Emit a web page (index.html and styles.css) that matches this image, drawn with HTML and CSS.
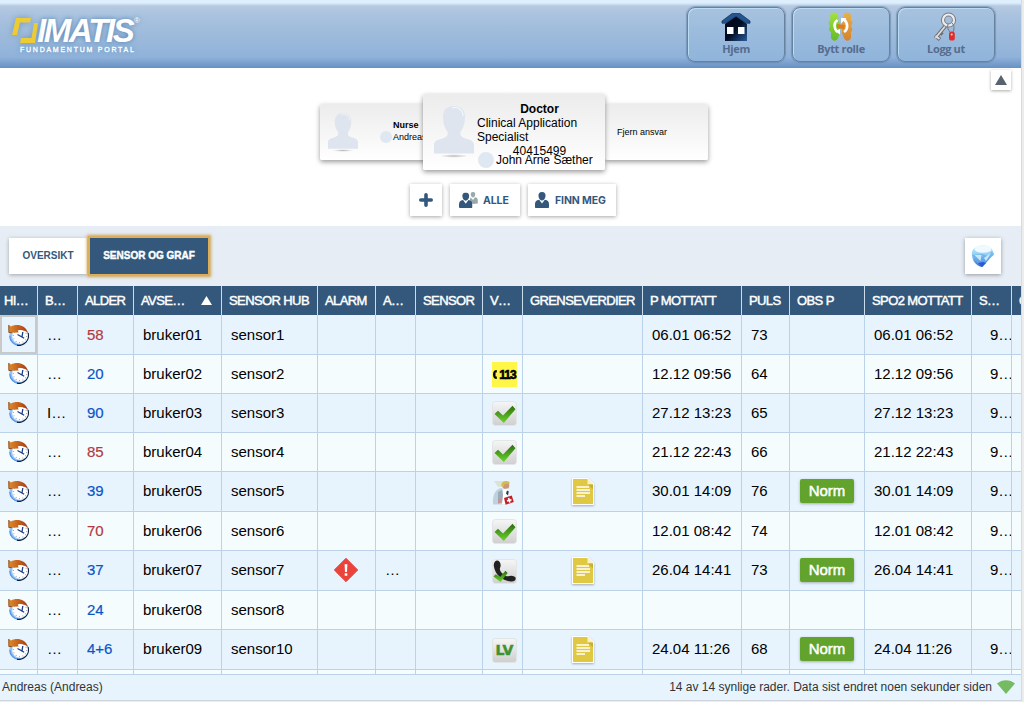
FILE: index.html
```html
<!DOCTYPE html>
<html lang="no">
<head>
<meta charset="utf-8">
<title>Imatis Fundamentum Portal</title>
<link rel="stylesheet" href="styles.css">
</head>
<body>
<svg class="defs" width="0" height="0" aria-hidden="true">
  <defs>
    <linearGradient id="gTile" x1="0" y1="0" x2="0" y2="1"><stop offset="0" stop-color="#f6f6f6"/><stop offset="1" stop-color="#cfcfcf"/></linearGradient>
    <linearGradient id="gCheck" x1="0" y1="0" x2="0" y2="1"><stop offset="0" stop-color="#2c6d12"/><stop offset="1" stop-color="#6bd62a"/></linearGradient>
    <linearGradient id="gArrow" x1="0" y1="0" x2="1" y2="0"><stop offset="0" stop-color="#e08a2c"/><stop offset="1" stop-color="#a93a0e"/></linearGradient>
    <linearGradient id="gHouse" x1="0" y1="0" x2="1" y2="1"><stop offset="0" stop-color="#000818"/><stop offset=".5" stop-color="#020c24"/><stop offset="1" stop-color="#2a5c9a"/></linearGradient>
    <linearGradient id="gGreen" x1="0" y1="0" x2="0" y2="1"><stop offset="0" stop-color="#a5e23c"/><stop offset="1" stop-color="#63bb26"/></linearGradient>
    <linearGradient id="gOrange" x1="0" y1="0" x2="0" y2="1"><stop offset="0" stop-color="#e8b04a"/><stop offset="1" stop-color="#d6822c"/></linearGradient>
    <linearGradient id="gGem" x1="0" y1="0" x2="0" y2="1"><stop offset="0" stop-color="#c9ebfb"/><stop offset=".5" stop-color="#8accf4"/><stop offset="1" stop-color="#2c5fd0"/></linearGradient>
    <radialGradient id="gShade"><stop offset="0" stop-color="#bbb"/><stop offset="1" stop-color="#bbb" stop-opacity="0"/></radialGradient>
    <symbol id="clock" viewBox="0 0 21 22">
      <circle cx="11" cy="12" r="9.800" fill="#8fc4f8"/>
      <path d="M1.800 12a9.500 9.500 0 0 0 9 9.300" fill="none" stroke="#5b94e6" stroke-width="1.200"/>
      <path d="M20 9a9.600 9.600 0 0 1-4 10.800a9 9 0 0 1-7 1.400" fill="none" stroke="#14203c" stroke-width="1.300"/>
      <circle cx="12" cy="12" r="7.900" fill="#fff"/>
      <circle cx="12" cy="12" r="6.700" fill="none" stroke="#a5abb2" stroke-width="1.200" stroke-dasharray="1 2.500"/>
      <path d="M9.500 10.500l4.500 2.500.8-5M14 13l2.200 1.200" fill="none" stroke="#1a3f88" stroke-width="1.300"/>
      <path d="M.5.800l2.500 1.700C7.500 0 17-.2 20 9 16.500 6 13 5.500 9.800 6.500l.8 1.900L1 8.800z" fill="url(#gArrow)"/>
      <path d="M.8 1v7.500l3 .1" fill="none" stroke="#8a4a16" stroke-width=".9"/>
    </symbol>
    <symbol id="tile" viewBox="0 0 25 25">
      <rect x=".5" y=".5" width="24" height="24" rx="3" fill="url(#gTile)" stroke="#e3e5e6"/>
    </symbol>
    <symbol id="check" viewBox="0 0 25 25">
      <use href="#tile"/>
      <path d="M2.500 13l3.500-3.200 5 4.700L20.500 4.700l3 3.500L11.800 22z" fill="url(#gCheck)"/>
    </symbol>
    <symbol id="phone" viewBox="0 0 25 25">
      <use href="#tile"/>
      <path d="M1.800 7C1.500 3.500 3.500 1.200 5.500 1.500c2.800.5 4 4.500 2.500 7.500-.6 1.500.4 3.800 2.500 5.500 2.400 2.200 4.200 3 5.800 2.800 3-1.500 7.200-.2 7.400 1.700.2 2.800-2 3.800-5 3.500C10.500 21.500 3 16 1.800 7z" fill="#222"/>
      <path d="M1.500 17.500l2.200-2.200 4.300 2.700 5.500-6.200 2.200 2.200L8.500 23z" fill="url(#gCheck)"/>
    </symbol>
    <symbol id="medic" viewBox="0 0 25 25">
      <path d="M1 24.500C0 13 5 8 10 8l3 16.500z" fill="#9db4c4" opacity=".55"/>
      <path d="M2 1h11l1 6H6z" fill="#cfcfae" opacity=".5"/>
      <path d="M6 12l6-3-1 12-5 3z" fill="#8c9dab" opacity=".7"/>
      <circle cx="13.800" cy="5.500" r="3.500" fill="#c9987a"/>
      <path d="M9.500 6C8.500.5 17.500-.5 17.800 3.500l-5.300.8-.8 3z" fill="#d3bb4e"/>
      <path d="M10.500 9.500l5-1 2 5-3 5-.5 6H10l1-9z" fill="#fff"/>
      <path d="M15 10.500l1.800 1-.8 4-2-2z" fill="#26394c"/>
      <path d="M6 19l3-1 1 5H6z" fill="#c99494"/>
      <path d="M12 18l7.800-2.500 2 6.500-8.200 2.800z" fill="#bf2329"/>
      <path d="M15.700 18.300l1.600-.5.5 1.500 1.500-.4.400 1.500-1.500.5.500 1.300-1.600.5-.5-1.400-1.400.4-.4-1.500 1.400-.4z" fill="#fff"/>
    </symbol>
    <symbol id="note" viewBox="0 0 22 27">
      <path d="M0 0h16l6 6v21H0z" fill="#fff"/>
      <path d="M1 1h14.500l5.500 5.500V26H1z" fill="#e0c843"/>
      <path d="M15.500 1l5.500 5.500h-5.500z" fill="#f8f3bf"/>
      <path d="M16 6.500h5v5z" fill="#c9ad35"/>
      <path d="M4.500 9h12.500M4.500 12h13.500M4.500 15h13.500M4.500 18h8.500" stroke="#fff" stroke-width="1.700"/>
    </symbol>
    <symbol id="alarm" viewBox="0 0 24 24">
      <path d="M12 .3L23.700 12 12 23.700.3 12z" fill="#e9433c" stroke="#e9433c" stroke-linejoin="round"/>
      <path d="M10.600 6.200h2.800l-.4 7.800h-2zM10.700 15.300h2.600v2.500h-2.600z" fill="#fff"/>
    </symbol>
    <symbol id="avatar" viewBox="0 0 40 52">
      <ellipse cx="20" cy="50" rx="14" ry="1.800" fill="url(#gShade)"/>
      <path d="M20 0C12 0 8.500 5.500 9 12c.2 6 2 10.500 4.500 13.500V29C11 34 0 32 0 39v8.500h40V39c0-7-11-5-13.500-10v-3.500C29 22.500 30.800 18 31 12 31.500 5.500 28 0 20 0z" fill="#dfe5ee"/>
      <path d="M18 2c6-2 11 2 11 8" fill="none" stroke="#f3f7fb" stroke-width="1.200"/>
    </symbol>
    <symbol id="person" viewBox="0 0 14 16">
      <path d="M7 0C4.300 0 3.200 2 3.500 4.200 3.800 6.700 5.300 8.400 7 8.400s3.200-1.700 3.500-4.200C10.800 2 9.700 0 7 0z"/>
      <path d="M4.200 7.800C1 8.300 0 9.800 0 12.300V15c0 .6.4 1 1 1h12c.6 0 1-.4 1-1v-2.700c0-2.500-1-4-4.200-4.500L7 11.500z"/>
    </symbol>
  </defs>
</svg>

<div class="page">
  <header class="top">
    <div class="logo">
      <svg class="logo-mark" width="28" height="26" viewBox="0 0 28 26"><path d="M4 1h15l-1 4.500H8L5 18H0zM22 6h4l-3 20H8l1-5h10.500z" fill="#eccb35"/></svg>
      <span class="logo-name">IMATIS</span><span class="logo-reg">®</span>
      <span class="logo-sub">FUNDAMENTUM PORTAL</span>
    </div>
    <nav class="nav">
      <a class="nav-btn"><svg width="30" height="30" viewBox="0 0 30 30"><path d="M4 12L15 4l11 8v17H4z" fill="url(#gHouse)"/><path d="M1 9L11 1.500h8L29 9v2.200h-3.500L15 4.500 4.500 11.200H1z" fill="#23558f" stroke="#0d2c55" stroke-width=".7"/><path d="M6 15h6.500v7H6zM17 15h6.500v7H17z" fill="#fff"/></svg><span>Hjem</span></a>
      <a class="nav-btn"><svg width="30" height="30" viewBox="0 0 30 30"><path d="M8 .5C3.500.5 3.500 5 5 8 1.500 9 2.500 12 4 14c-2 3-1 5 1 6v6c2 4 6 3 7 0l2-5V11l-2-3c1-3 0-7.500-4-7.500z" fill="url(#gGreen)"/><path d="M21 .5c4.500 0 5 4.500 3.500 7.500 3 1 2 4 .5 6 2 3 1.500 5 0 6v6c-2 4-6 3-7 0l-2-5V11l2-3c-1-3-.5-7.500 3-7.500z" fill="url(#gOrange)"/><path d="M11 12l8 1-1 4-7-1z" fill="#e47b18"/><path d="M11.500 8C7 11 8 17 11.500 20M18 20c4.500-3 4-9 0-12.500" fill="none" stroke="#fff" stroke-width="2.600"/><path d="M9 19l5-2v5.500zM20.500 6L15 6v5.500z" fill="#fff"/></svg><span>Bytt rolle</span></a>
      <a class="nav-btn"><svg width="30" height="30" viewBox="0 0 30 30"><path d="M16 12L4.500 26M4 23.500l5 4M8 19.500l3.500 3" stroke="#6c6d73" stroke-width="3.600"/><path d="M16 12L4.500 26M4.500 24l4 3" stroke="#ddd" stroke-width="1.800"/><circle cx="17.500" cy="8" r="5.500" fill="none" stroke="#777b82" stroke-width="4.200"/><circle cx="17.500" cy="8" r="5.500" fill="none" stroke="#ececef" stroke-width="2.200"/><path d="M17 12c-1 3 0 6 2 8M21 11c3 3 2 6 1 10" fill="none" stroke="#777" stroke-width="1"/><rect x="18" y="19.500" width="5.800" height="9" rx="2.600" fill="#df2d2b"/><circle cx="20.700" cy="22.500" r="1" fill="#ffd6d0"/></svg><span>Logg ut</span></a>
    </nav>
  </header>

  <section class="roles">
    <button class="collapse"><svg width="12" height="10" viewBox="0 0 12 10"><path d="M6 0l6 10H0z" fill="#58636f"/></svg></button>
    <div class="cards">
      <div class="card side left">
        <svg class="av-small" width="30" height="39"><use href="#avatar"/></svg>
        <div class="side-text"><b>Nurse</b><span class="who"><i class="dot"></i>Andreas</span></div>
      </div>
      <div class="card main">
        <svg class="av-big" width="40" height="52"><use href="#avatar"/></svg>
        <div class="main-text">
          <b>Doctor</b>
          <span class="desc">Clinical Application Specialist</span>
          <span>40415499</span>
          <span class="who big"><i class="dot"></i>John Arne Sæther</span>
        </div>
      </div>
      <div class="card side right">Fjern ansvar</div>
    </div>
    <div class="actions">
      <button class="act plus"><svg width="14" height="14" viewBox="0 0 14 14"><path d="M7 1.800v10.400M1.800 7h10.400" stroke="#33587c" stroke-width="3.600" stroke-linecap="round"/></svg></button>
      <button class="act all"><svg width="19" height="16" viewBox="0 0 19 16"><g fill="#9aa8aa"><path d="M14 0c-1.800 0-2.400 1.300-2.200 2.700.3 1.700 1.200 2.700 2.200 2.700s1.900-1 2.200-2.700C16.400 1.300 15.800 0 14 0zM11.500 5.300L14 8l2-2.700c2 .3 2.800 1.200 2.800 3v3.200l-5 .5-3-4z"/></g><use href="#person" width="13.500" height="15.500" y=".5" fill="#33587c"/></svg>ALLE</button>
      <button class="act me"><svg width="14" height="16" fill="#33587c"><use href="#person"/></svg>FINN MEG</button>
    </div>
  </section>

  <section class="tabs">
    <button class="tab">OVERSIKT</button><button class="tab active">SENSOR OG GRAF</button>
    <button class="gem"><svg width="24" height="24" viewBox="0 0 24 24"><path d="M1 8C3 0 17-1 21 5l2 5-8 9-4 4C5 22 0 16 1 8z" fill="url(#gGem)"/><ellipse cx="12" cy="5" rx="8.500" ry="3.800" fill="#eefaff"/><path d="M1 11l10-1 6 2 4-5 2 4-7 5-4 7L6 19z" fill="#5faaea" opacity=".6"/><path d="M3.500 11l6 6 1-6zM13 14l7-5-5 8z" fill="#d7f0fd" opacity=".85"/><path d="M7 19l5-1 3 1-4 4z" fill="#2f58d0"/></svg></button>
  </section>

  <main class="grid">
    <div class="row head">
      <div class="tight">HI…</div><div>B…</div><div>ALDER</div><div class="sorted">AVSE…<svg width="11" height="9" viewBox="0 0 11 9"><path d="M5.500 0L11 9H0z" fill="#fff"/></svg></div><div>SENSOR HUB</div><div>ALARM</div><div>A…</div><div>SENSOR</div><div>V…</div><div>GRENSEVERDIER</div><div>P MOTTATT</div><div>PULS</div><div>OBS P</div><div>SPO2 MOTTATT</div><div>S…</div><div>O</div>
    </div>
    <div class="row tall first">
      <div class="ic sel"><svg width="21" height="22"><use href="#clock"/></svg></div><div>…</div><div class="red">58</div><div>bruker01</div><div>sensor1</div><div></div><div></div><div></div><div></div><div></div><div>06.01 06:52</div><div>73</div><div></div><div>06.01 06:52</div><div class="spo">9…</div><div></div>
    </div>
    <div class="row alt">
      <div class="ic"><svg width="21" height="22"><use href="#clock"/></svg></div><div>…</div><div class="blue">20</div><div>bruker02</div><div>sensor2</div><div></div><div></div><div></div><div class="st"><span class="emergency"><svg width="4" height="9" viewBox="0 0 4 9"><path d="M3.800 0v2.500H2.500v4h1.300V9C1 9 0 7 0 4.500S1 0 3.800 0z"/></svg><span class="num">113</span></span></div><div></div><div>12.12 09:56</div><div>64</div><div></div><div>12.12 09:56</div><div class="spo">9…</div><div></div>
    </div>
    <div class="row">
      <div class="ic"><svg width="21" height="22"><use href="#clock"/></svg></div><div>I…</div><div class="blue">90</div><div>bruker03</div><div>sensor3</div><div></div><div></div><div></div><div class="st"><svg width="25" height="25"><use href="#check"/></svg></div><div></div><div>27.12 13:23</div><div>65</div><div></div><div>27.12 13:23</div><div class="spo">9…</div><div></div>
    </div>
    <div class="row alt">
      <div class="ic"><svg width="21" height="22"><use href="#clock"/></svg></div><div>…</div><div class="red">85</div><div>bruker04</div><div>sensor4</div><div></div><div></div><div></div><div class="st"><svg width="25" height="25"><use href="#check"/></svg></div><div></div><div>21.12 22:43</div><div>66</div><div></div><div>21.12 22:43</div><div class="spo">9…</div><div></div>
    </div>
    <div class="row tall">
      <div class="ic"><svg width="21" height="22"><use href="#clock"/></svg></div><div>…</div><div class="blue">39</div><div>bruker05</div><div>sensor5</div><div></div><div></div><div></div><div class="st"><svg width="25" height="25"><use href="#medic"/></svg></div><div class="nt"><svg width="22" height="27"><use href="#note"/></svg></div><div>30.01 14:09</div><div>76</div><div><span class="norm">Norm</span></div><div>30.01 14:09</div><div class="spo">9…</div><div></div>
    </div>
    <div class="row alt">
      <div class="ic"><svg width="21" height="22"><use href="#clock"/></svg></div><div>…</div><div class="red">70</div><div>bruker06</div><div>sensor6</div><div></div><div></div><div></div><div class="st"><svg width="25" height="25"><use href="#check"/></svg></div><div></div><div>12.01 08:42</div><div>74</div><div></div><div>12.01 08:42</div><div class="spo">9…</div><div></div>
    </div>
    <div class="row tall">
      <div class="ic"><svg width="21" height="22"><use href="#clock"/></svg></div><div>…</div><div class="blue">37</div><div>bruker07</div><div>sensor7</div><div class="al"><svg width="24" height="24"><use href="#alarm"/></svg></div><div>…</div><div></div><div class="st"><svg width="25" height="25"><use href="#phone"/></svg></div><div class="nt"><svg width="22" height="27"><use href="#note"/></svg></div><div>26.04 14:41</div><div>73</div><div><span class="norm">Norm</span></div><div>26.04 14:41</div><div class="spo">9…</div><div></div>
    </div>
    <div class="row alt">
      <div class="ic"><svg width="21" height="22"><use href="#clock"/></svg></div><div>…</div><div class="blue">24</div><div>bruker08</div><div>sensor8</div><div></div><div></div><div></div><div></div><div></div><div></div><div></div><div></div><div></div><div></div><div></div>
    </div>
    <div class="row tall">
      <div class="ic"><svg width="21" height="22"><use href="#clock"/></svg></div><div>…</div><div class="blue">4+6</div><div>bruker09</div><div>sensor10</div><div></div><div></div><div></div><div class="st"><span class="lv">LV</span></div><div class="nt"><svg width="22" height="27"><use href="#note"/></svg></div><div>24.04 11:26</div><div>68</div><div><span class="norm">Norm</span></div><div>24.04 11:26</div><div class="spo">9…</div><div></div>
    </div>
    <div class="row alt partial">
      <div></div><div></div><div></div><div></div><div></div><div></div><div></div><div></div><div></div><div></div><div></div><div></div><div></div><div></div><div></div><div></div>
    </div>
  </main>

  <footer class="status">
    <span>Andreas (Andreas)</span>
    <span class="info">14 av 14 synlige rader. Data sist endret noen sekunder siden<svg width="18" height="14" viewBox="0 0 18 14"><path d="M0 3.500C5-1 13-1 18 3.500L9 14z" fill="#74bb62"/></svg></span>
  </footer>
</div>
</body>
</html>
```
FILE: styles.css
```css
* { box-sizing: border-box; }
body {
  margin: 0;
  height: 702px;
  overflow: hidden;
  background: #ececec;
  font-family: "Liberation Sans", Arial, sans-serif;
  color: #000;
}
.defs { position: absolute; }
svg { display: block; flex: none; }
button { border: 0; padding: 0; font-family: inherit; }
.page {
  width: 1022px;
  height: 701px;
  overflow: hidden;
  background: #fff;
  border-right: 1px solid #d9dadb;
  border-bottom: 1px solid #cfd6dd;
}

/* Top bar */
.top {
  height: 68px;
  display: flex;
  justify-content: space-between;
  background: linear-gradient(#dfeffd 0, #dceefc 3px, #b6c9e0 6px, #a9c2df 16px, #9dbadb 36px, #90b2da 57px, #6b94c5 67px, #6790c0 68px);
}
.logo {
  padding: 17px 0 0 12px;
  display: grid;
  grid-template-columns: 25px 96px auto;
  grid-template-rows: 27px 12px;
  color: #fff;
  text-shadow: 0 0 5px #4f80b2;
}
.logo-mark { filter: drop-shadow(0 0 3px #7097bd); }
.logo-name {
  font: italic bold 33px/27px "Liberation Sans", Arial, sans-serif;
  letter-spacing: -2.3px;
  white-space: nowrap;
}
.logo-reg { font-size: 8px; line-height: 7px; padding-left: 1px; }
.logo-sub {
  grid-column: 1 / 4;
  padding-left: 8px;
  font-size: 7px;
  line-height: 11px;
  letter-spacing: 1.75px;
  white-space: nowrap;
  -webkit-text-stroke: .3px #fff;
}
.nav { display: flex; gap: 7px; padding: 7px 26px 0 0; }
.nav-btn {
  width: 98px;
  height: 55px;
  border: 1px solid #66829f;
  border-radius: 8px;
  box-shadow: inset 1px 1px 0 #b9dcf2, 0 0 1px 1px rgba(88, 120, 155, .5);
  background: linear-gradient(#a7c2df, #8fb4db);
  display: flex;
  flex-direction: column;
  align-items: center;
  padding-top: 4px;
  font: bold 11px/14px "Open Sans", "Noto Sans", sans-serif;
  letter-spacing: -.35px;
  color: #566c8e;
}

/* Role cards */
.roles { height: 158px; position: relative; padding-top: 26px; }
.collapse {
  position: absolute;
  top: 2px;
  right: 10px;
  width: 20px;
  height: 20px;
  display: grid;
  place-items: center;
  background: #fff;
  box-shadow: 0 1px 3px #aaa;
}
.cards { display: flex; align-items: center; height: 76px; padding-left: 320px; }
.card {
  background: linear-gradient(#ececec, #fff);
  border-radius: 2px;
  box-shadow: 0 2px 5px rgba(0, 0, 0, .4);
  display: flex;
}
.side { height: 56px; font-size: 9px; }
.left { width: 110px; padding: 9px 0 0 8px; white-space: nowrap; overflow: hidden; }
.side-text { padding: 6px 0 0 22px; line-height: 12px; }
.side-text b { display: block; padding-left: 13px; }
.who { display: flex; align-items: center; white-space: nowrap; }
.dot { width: 12px; height: 12px; border-radius: 50%; background: #dfe8f2; margin-right: 1px; }
.main {
  position: relative;
  width: 182px;
  height: 76px;
  margin-left: -7px;
  padding: 12px 3px 0 11px;
}
.main-text {
  width: 125px;
  margin: -4px 0 0 3px;
  font-size: 12px;
  line-height: 14px;
  display: flex;
  flex-direction: column;
  align-items: center;
}
.desc { width: 100%; }
.who.big { align-self: flex-start; margin-top: -6px; padding-left: 1px; }
.big .dot { width: 16px; height: 16px; margin-right: 2px; }
.right { width: 103px; align-items: center; padding-left: 12px; }
.actions { display: flex; gap: 8px; padding: 14px 0 0 410px; }
.act {
  height: 32px;
  display: flex;
  align-items: center;
  background: #fff;
  box-shadow: 0 1px 4px rgba(0, 0, 0, .35);
  font: 700 10.5px Inter, sans-serif;
  letter-spacing: -.1px;
  color: #33587c;
}
.plus { width: 32px; justify-content: center; }
.all { width: 70px; padding-left: 9px; gap: 5px; }
.me { width: 88px; padding-left: 7px; gap: 6px; }

/* Tabs */
.tabs { height: 60px; padding: 12px 20px 0 9px; display: flex; background: #e6edf5; }
.tab {
  width: 78px;
  height: 36px;
  padding-bottom: 2px;
  background: #fff;
  box-shadow: 0 1px 4px rgba(0, 0, 0, .3);
  color: #33587c;
  font-size: 10px;
  font-weight: bold;
}
.tab.active {
  width: 118px;
  margin-left: 3px;
  background: #33587c;
  color: #fff;
  box-shadow: 0 0 0 2px #dcae58, 0 0 3px 3px #cda14d;
  -webkit-text-stroke: .4px #fff;
}
.gem {
  width: 36px;
  height: 36px;
  margin-left: auto;
  background: #fff;
  display: grid;
  place-items: center;
  box-shadow: 0 1px 4px rgba(0, 0, 0, .35);
}

/* Data grid */
.grid { height: 388px; overflow: hidden; }
.row {
  display: grid;
  grid-template-columns: 38px 40px 56px 88px 96px 58px 40px 67px 40px 120px 99px 48px 75px 107px 40px 9px;
  height: 39px;
  font-size: 15px;
  background: #e7f4fe;
}
.row.alt { background: #f4fcfe; }
.row.tall { height: 40px; }
.row > div {
  display: flex;
  align-items: center;
  padding: 0 0 2px 9px;
  border-right: 1px solid #bcd2e8;
  border-bottom: 1px solid #bcd2e8;
  white-space: nowrap;
  overflow: hidden;
}
.row.first > div { padding-bottom: 0; }
.row > div:last-child { border-right: 0; }
.row .ic { padding-left: 8px; }
.row .sel { box-shadow: inset 0 0 0 2px #c9c9c9; }
.row .st { padding: 1px 0 0 9px; }
.row .nt { padding: 0; justify-content: center; }
.nt svg { filter: drop-shadow(0 1px 1px rgba(0, 0, 0, .3)); }
.row .al { padding-left: 16px; }
.row .spo { padding-left: 18px; }
.red { color: #b3393f; }
.blue { color: #0b55c8; }
.red, .blue { -webkit-text-stroke: .2px; }
.row.head {
  height: 29px;
  background: #33587c;
  color: #fff;
  font-size: 13px;
  letter-spacing: -.6px;
  -webkit-text-stroke: .45px #fff;
}
.row.head > div { padding: 0 0 0 7px; border-bottom: 0; border-color: #c9dceb; }
.row.head .tight { padding-left: 4px; }
.row.head .sorted { justify-content: space-between; padding-right: 9px; }
.row.partial { height: 4px; }
.row.partial > div { border-bottom: 0; }
.norm {
  width: 54px;
  height: 24px;
  margin-left: 1px;
  border-radius: 2px;
  background: #61a32c;
  color: #fff;
  line-height: 24px;
  text-align: center;
  -webkit-text-stroke: .5px #fff;
  box-shadow: 0 1px 3px rgba(0, 0, 0, .3);
}
.emergency {
  width: 25px;
  height: 25px;
  display: flex;
  align-items: center;
  justify-content: center;
  gap: 2px;
  background: #fff647;
}
.num {
  font-size: 12px;
  font-weight: bold;
  letter-spacing: -.9px;
  -webkit-text-stroke: .6px #000;
}
.lv {
  width: 25px;
  height: 25px;
  border: 1px solid #e1e4e5;
  border-radius: 3px;
  background: linear-gradient(#f5f5f5, #cfcfcf);
  color: #40912f;
  font: bold 14px/23px "DejaVu Sans", sans-serif;
  -webkit-text-stroke: .5px #40912f;
  text-align: center;
}

/* Status bar */
.status {
  height: 26px;
  padding: 0 6px 2px 2px;
  display: flex;
  align-items: center;
  justify-content: space-between;
  background: #e7f4fe;
  border-top: 1px solid #bcd2e8;
  font-size: 12px;
  color: #333;
}
.info { display: flex; align-items: center; gap: 5px; }
```
